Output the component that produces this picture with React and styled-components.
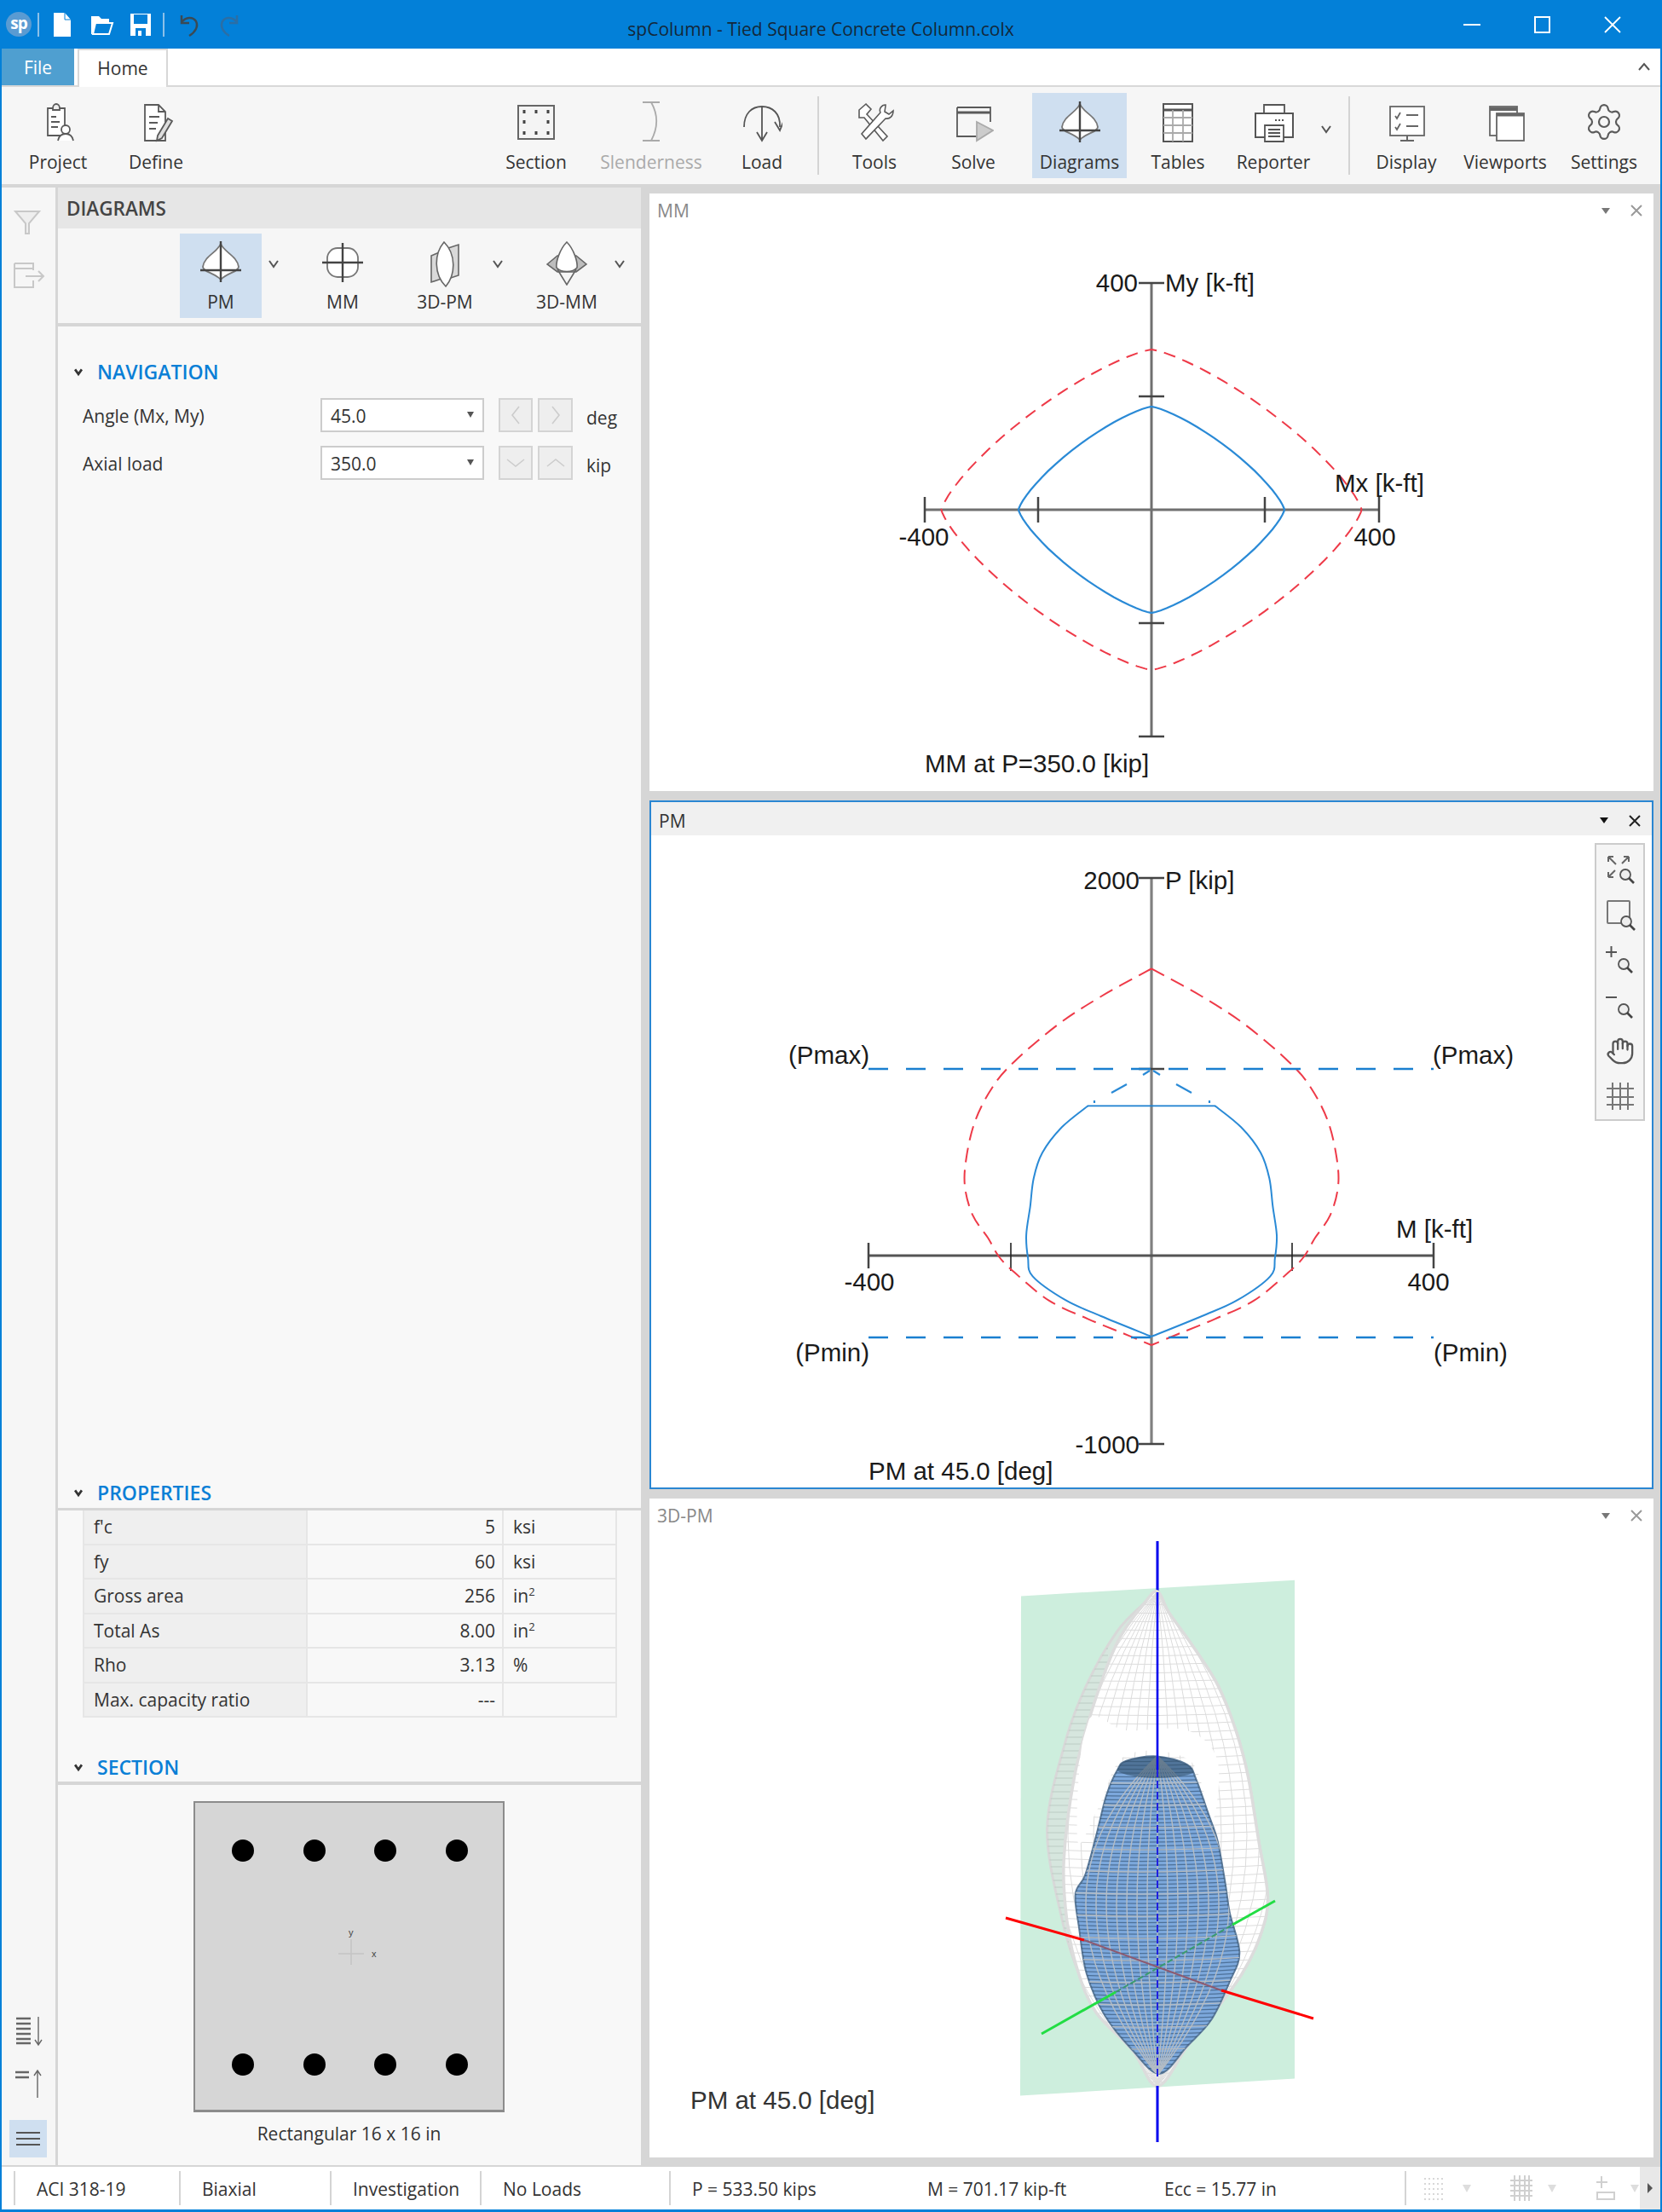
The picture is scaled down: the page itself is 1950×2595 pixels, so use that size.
import { Fragment } from 'react'
import styled, { createGlobalStyle } from 'styled-components'
import { Settings, Hand } from 'lucide-react'

const Global = createGlobalStyle`
   html, body { margin: 0; padding: 0; background: #fff; }
   * { box-sizing: border-box; }
`

const UI_FONT = `"Open Sans", "Noto Sans", sans-serif`
const BLUE = '#0380d8'

/* ---------- chart helpers ---------- */
const smoothPath = (points, closed = false) => {
   const n = points.length
   const at = i => (closed ? points[(i + n) % n] : points[Math.max(0, Math.min(n - 1, i))])
   let d = `M${points[0][0].toFixed(1)} ${points[0][1].toFixed(1)}`
   for (let i = 0; i < (closed ? n : n - 1); i++) {
      const [p0, p1, p2, p3] = [at(i - 1), at(i), at(i + 1), at(i + 2)]
      const c1 = [p1[0] + (p2[0] - p0[0]) / 6, p1[1] + (p2[1] - p0[1]) / 6]
      const c2 = [p2[0] - (p3[0] - p1[0]) / 6, p2[1] - (p3[1] - p1[1]) / 6]
      d += ` C${c1[0].toFixed(1)} ${c1[1].toFixed(1)} ${c2[0].toFixed(1)} ${c2[1].toFixed(1)} ${p2[0].toFixed(1)} ${p2[1].toFixed(1)}`
   }
   return closed ? d + 'Z' : d
}

const superEllipse = (cx, cy, a, b, p) => {
   const out = []
   for (let t = 0; t < 360; t += 4) {
      const r = (t * Math.PI) / 180
      const c = Math.cos(r)
      const s = Math.sin(r)
      out.push(`${(cx + a * Math.sign(c) * Math.abs(c) ** (2 / p)).toFixed(1)},${(cy + b * Math.sign(s) * Math.abs(s) ** (2 / p)).toFixed(1)}`)
   }
   return out.join(' ')
}

// zoom-crop coordinates to page coordinates
const pm = ([x, y]) => [900 + x / 1.96, 1100 + y / 3]
const d3 = ([x, y]) => [1000 + x / 2.8, 1780 + y / 2.24]
const flip = points => points.map(([x, y]) => [2 * 884 - x, y])

const PM_RED = [[884, 112], [1000, 210], [1100, 310], [1200, 440], [1250, 530], [1290, 650], [1310, 780], [1313, 880], [1295, 980], [1260, 1060], [1235, 1125], [1200, 1180], [1120, 1280], [1030, 1345], [950, 1395], [884, 1437]]
const PM_BLUE = [[1030, 595], [1090, 670], [1135, 760], [1155, 850], [1163, 950], [1172, 1050], [1168, 1130], [1157, 1195], [1080, 1280], [1000, 1335], [884, 1407]]
const halves = points => `${smoothPath(points.map(pm))} ${smoothPath(flip(points).map(pm))}`

const SHELL_OUT = [[1003, 195], [1040, 250], [1120, 340], [1200, 440], [1260, 560], [1300, 680], [1335, 850], [1365, 1000], [1340, 1100], [1280, 1200], [1180, 1310], [1100, 1390], [1003, 1495], [920, 1400], [800, 1300], [740, 1190], [690, 1060], [640, 820], [700, 590], [770, 440], [870, 300], [960, 225]].map(d3)
const SHELL_IN = [[1003, 195], [1040, 250], [1120, 340], [1200, 440], [1260, 560], [1300, 680], [1335, 850], [1365, 1000], [1340, 1100], [1280, 1200], [1180, 1310], [1100, 1390], [1003, 1495], [920, 1400], [800, 1300], [740, 1190], [705, 1060], [695, 900], [730, 680], [790, 500], [870, 330], [960, 225]].map(d3)
const CORE = [[1000, 628], [1100, 650], [1130, 690], [1170, 780], [1200, 850], [1225, 960], [1240, 1040], [1272, 1145], [1240, 1220], [1180, 1320], [1100, 1390], [1010, 1462], [920, 1400], [830, 1310], [770, 1200], [745, 1080], [733, 990], [765, 940], [800, 840], [835, 730], [870, 665], [900, 640]].map(d3)
// bare band of the shell behind the top of the core, where the mesh is missing
const SHELL_GAP = [[770, 540], [900, 560], [1100, 560], [1200, 640], [1180, 800], [1110, 640], [900, 625], [810, 760], [740, 850]].map(d3)

const range = (from, to, step) => {
   const out = []
   for (let v = from; v <= to; v += step) out.push(v)
   return out
}

/* ---------- layout ---------- */
const Window = styled.div`
   width: 1950px;
   height: 2595px;
   display: flex;
   flex-direction: column;
   border: solid ${BLUE};
   border-width: 0 2px 3px 2px;
   background: #d6d6d6;
   font-family: ${UI_FONT};
   font-size: 21px;
   color: #333;
   overflow: hidden;
`

const TitleBar = styled.header`
   height: 57px;
   margin: 0 -2px;
   background: ${BLUE};
   display: flex;
   align-items: center;
   position: relative;
   flex: none;
`

const QuickAccess = styled.div`
   display: flex;
   align-items: center;
   padding-left: 7px;
`

const Logo = styled.div`
   width: 30px;
   height: 29px;
   border-radius: 50%;
   background: #5a9bd2;
   color: #fff;
   font: bold 19px/27px ${UI_FONT};
   text-align: center;
   letter-spacing: -1px;
`

const QuickSep = styled.span`
   width: 2px;
   height: 28px;
   background: #8cc0e8;
   margin: 0 ${p => p.$right ?? 0}px 0 ${p => p.$left ?? 0}px;
`

const QuickIcon = styled.svg`
   width: ${p => p.$w}px;
   height: 30px;
   margin-right: ${p => p.$gap ?? 0}px;
   flex: none;
`

const WindowTitle = styled.div`
   position: absolute;
   left: 0;
   right: 24px;
   top: 17px;
   text-align: center;
   color: #13283a;
   font-size: 21px;
   line-height: 34px;
`

const WindowControls = styled.div`
   margin-left: auto;
   display: flex;
   align-items: center;
   padding-right: 48px;
   gap: 63px;
   position: relative;
`

const TabRow = styled.nav`
   height: 45px;
   background: #fff;
   border-bottom: 2px solid #d8d8d8;
   display: flex;
   flex: none;
   position: relative;
`

const FileTab = styled.div`
   width: 85px;
   height: 43px;
   background: #4f9fd0;
   color: #fff;
   text-align: center;
   line-height: 44px;
`

const HomeTab = styled.div`
   width: 106px;
   height: 45px;
   margin-left: 4px;
   background: #fff;
   border: 2px solid #d8d8d8;
   border-bottom: none;
   text-align: center;
   line-height: 42px;
   position: relative;
   z-index: 1;
`

const Collapse = styled.svg`
   position: absolute;
   right: 10px;
   top: 14px;
   width: 18px;
   height: 14px;
`

const Ribbon = styled.section`
   height: 114px;
   background: #f6f6f6;
   display: flex;
   padding: 7px 0 7px 6px;
   flex: none;
`

const RibbonItem = styled.div`
   width: ${p => p.$w}px;
   flex: none;
   display: flex;
   flex-direction: column;
   align-items: center;
   background: ${p => (p.$active ? '#cfdff0' : 'transparent')};
   color: ${p => (p.$disabled ? '#aaa' : '#333')};
   svg { margin-top: 10px; display: block; flex: none; }
`

const RibbonLabel = styled.span`
   margin-top: 9px;
   line-height: 28px;
   white-space: nowrap;
`

const RibbonGap = styled.span`
   width: ${p => p.$w}px;
   flex: none;
`

const RibbonSep = styled.span`
   width: 2px;
   flex: none;
   height: 92px;
   margin-top: 4px;
   background: #d4d4d4;
`

const RibbonChevron = styled.svg`
   width: 20px;
   height: 14px;
   margin: 36px 0 0 -8px;
   flex: none;
`

const Main = styled.main`
   flex: 1;
   min-height: 0;
   display: flex;
   background: #d6d6d6;
   padding-top: 4px;
`

const Rail = styled.aside`
   width: 63px;
   flex: none;
   background: #f6f6f6;
   display: flex;
   flex-direction: column;
   align-items: flex-start;
   padding: 20px 0 9px 9px;
`

const RailIcon = styled.svg`
   width: 44px;
   height: 44px;
   margin-top: ${p => p.$top ?? 0}px;
   flex: none;
`

const RailActive = styled.div`
   width: 44px;
   height: 44px;
   margin-top: 18px;
   background: #cfdff0;
   display: flex;
   flex-direction: column;
   justify-content: center;
   gap: 5px;
   padding: 0 8px;
   span { height: 2px; background: #555; }
`

const SidePanel = styled.div`
   width: 684px;
   margin-left: 3px;
   flex: none;
   background: #f8f8f8;
   display: flex;
   flex-direction: column;
`

const PanelTitle = styled.div`
   height: 48px;
   background: #e6e6e6;
   padding-left: 10px;
   font-weight: 600;
   font-size: 22.5px;
   line-height: 50px;
   color: #444;
   flex: none;
`

const DiagramTools = styled.div`
   height: 111px;
   background: #f6f6f6;
   display: flex;
   padding: 6px 0 0 143px;
   flex: none;
`

const DiagramTool = styled.div`
   width: ${p => p.$w}px;
   height: 99px;
   margin-left: ${p => p.$left ?? 0}px;
   flex: none;
   display: flex;
   flex-direction: column;
   align-items: center;
   background: ${p => (p.$active ? '#cfdff0' : 'transparent')};
   svg { margin-top: 9px; flex: none; }
   span { line-height: 28px; margin: auto 0 5px; }
`

const ToolChevron = styled.svg`
   width: 20px;
   height: 14px;
   margin: 29px 0 0 ${p => p.$before ?? 0}px;
   flex: none;
`

const Rule = styled.div`
   height: ${p => p.$h ?? 4}px;
   background: #d6d6d6;
   flex: none;
`

const SectionHead = styled.div`
   height: ${p => p.$h}px;
   display: flex;
   align-items: center;
   padding-left: 16px;
   margin-top: ${p => p.$top ?? 0}px;
   color: #0a7fd6;
   font-weight: 600;
   font-size: 23px;
   flex: none;
   svg { width: 16px; height: 11px; margin-right: 14px; flex: none; }
`

const NavRow = styled.div`
   display: flex;
   align-items: center;
   height: 40px;
   margin-top: 16px;
   padding-left: 29px;
`

const NavLabel = styled.div`
   width: 279px;
   padding-top: 2px;
   flex: none;
`

const Combo = styled.div`
   width: 192px;
   height: 40px;
   background: #fff;
   border: 2px solid #ccc;
   padding: 0 10px;
   line-height: 38px;
   position: relative;
   flex: none;
   &::after {
      content: '';
      position: absolute;
      right: 10px;
      top: 14px;
      border: solid transparent;
      border-width: 7px 4px 0 4px;
      border-top-color: #555;
   }
`

const Stepper = styled.div`
   width: ${p => (p.$first ? 40 : 41)}px;
   height: 40px;
   margin-left: ${p => (p.$first ? 17 : 6)}px;
   background: #eee;
   border: 2px solid #d4d4d4;
   display: flex;
   align-items: center;
   justify-content: center;
   flex: none;
`

const Unit = styled.div`
   margin-left: 16px;
   padding-top: 6px;
`

const Spacer = styled.div`
   flex: 1;
`

const PropTable = styled.div`
   margin-left: 29px;
   width: 625px;
   display: grid;
   grid-template-columns: 262px 230px 133px;
   grid-auto-rows: 40.5px;
   border-left: 2px solid #e6e6e6;
`

const PropCell = styled.div`
   background: ${p => (p.$head ? '#efefef' : '#f8f8f8')};
   border: solid #e6e6e6;
   border-width: 0 2px 2px 0;
   line-height: 38px;
   padding: ${p => (p.$num ? '0 8px 0 0' : '0 0 0 11px')};
   text-align: ${p => (p.$num ? 'right' : 'left')};
   sup { font-size: 13px; line-height: 0; }
`

const SectionBox = styled.div`
   width: 365px;
   height: 365px;
   margin: 19px 0 0 159px;
   background: #d6d6d6;
   border: 2px solid #8c8c8c;
   border-bottom-width: 3px;
   padding: 43px 41px 0 43px;
   display: flex;
   flex-direction: column;
   flex: none;
   position: relative;
`

const BarRow = styled.div`
   display: flex;
   justify-content: space-between;
   margin-top: ${p => p.$top ?? 0}px;
`

const Bar = styled.span`
   width: 26px;
   height: 26px;
   border-radius: 50%;
   background: #000;
`

const LocalAxes = styled.svg`
   position: absolute;
   left: 165px;
   top: 145px;
   width: 50px;
   height: 60px;
`

const AxisName = styled.text`
   font: 11px "Liberation Sans", sans-serif;
   fill: #444;
   stroke: none;
`

const Caption = styled.div`
   margin: 10px 0 22px 159px;
   width: 365px;
   line-height: 30px;
   text-align: center;
   flex: none;
`

const Viewports = styled.div`
   margin: 7px 0 0 10px;
   width: 1178px;
   flex: none;
   display: grid;
   grid-template-rows: 701px 808px 773px;
   row-gap: 11px;
   align-content: start;
`

const Viewport = styled.section`
   background: #fff;
   display: flex;
   flex-direction: column;
   position: relative;
   outline: ${p => (p.$active ? `2px solid #2a86d2` : 'none')};
   outline-offset: -2px;
   svg.chart { display: block; flex: none; }
`

const ViewHead = styled.div`
   height: ${p => (p.$active ? 39 : 36)}px;
   padding: 4px 12px 0 9px;
   margin: ${p => (p.$active ? '2px 2px -2px' : '0')};
   background: ${p => (p.$active ? '#f0f0f0' : '#fff')};
   color: ${p => (p.$active ? '#333' : '#888')};
   display: flex;
   align-items: center;
   flex: none;
`

const ViewCaret = styled.span`
   margin-left: auto;
   margin-right: 23px;
   border: solid transparent;
   border-width: 7px 5px 0 5px;
   border-top-color: ${p => (p.$active ? '#111' : '#777')};
`

const ViewClose = styled.svg`
   width: 16px;
   height: 16px;
   stroke: ${p => (p.$active ? '#222' : '#999')};
   stroke-width: 2;
`

const ChartText = styled.text`
   font-family: "Liberation Sans", Arial, sans-serif;
   font-size: 29.5px;
   fill: ${p => p.$fill ?? '#1a1a1a'};
   dominant-baseline: central;
`

const ZoomBar = styled.div`
   position: absolute;
   left: 1109px;
   top: 50px;
   width: 59px;
   height: 326px;
   background: #f5f5f5;
   border: 2px solid #ccc;
   display: flex;
   flex-direction: column;
   align-items: center;
   padding-top: 3px;
   color: #666;
   svg { flex: none; display: block; }
`

const ZoomSlot = styled.div`
   height: 54px;
   display: flex;
   align-items: center;
   justify-content: center;
`

const StatusBar = styled.footer`
   height: 52px;
   background: #fff;
   border-top: 2px solid #d6d6d6;
   display: flex;
   align-items: center;
   padding-left: 14px;
   flex: none;
   position: relative;
`

const StatusCell = styled.div`
   width: ${p => p.$w}px;
   height: 40px;
   flex: none;
   padding-left: 25px;
   border-left: ${p => (p.$plain ? 'none' : '2px solid #d4d4d4')};
   line-height: 42px;
   white-space: nowrap;
`

const StatusDivider = styled.span`
   width: 2px;
   height: 40px;
   background: #d4d4d4;
   flex: none;
`

const StatusIcon = styled.svg`
   width: ${p => p.$w}px;
   height: 30px;
   margin-left: ${p => p.$left}px;
   flex: none;
`

const StatusEnd = styled.div`
   position: absolute;
   right: 0;
   top: 0;
   bottom: 0;
   width: 24px;
   background: #e8e8e8;
   display: flex;
   align-items: center;
   justify-content: center;
   &::after {
      content: '';
      border: solid transparent;
      border-width: 6px 0 6px 6px;
      border-left-color: #555;
   }
`

const StatusCaret = styled.span`
   margin-left: ${p => p.$left}px;
   border: solid transparent;
   border-width: 9px 5px 0 5px;
   border-top-color: #ddd;
   flex: none;
`

/* ---------- small icons ---------- */
const Chev = ({ as: As = 'svg', ...rest }) => (
   <As viewBox='0 0 20 14' fill='none' stroke='#555' strokeWidth='2' {...rest}>
      <path d='M5 3l5 7 5-7' />
   </As>
)

const HeadChev = () => <Chev stroke='#333' strokeWidth='3.4' />

const Ico = ({ children, size = 48, stroke = '#5a5a5a', sw = 1.8 }) => (
   <svg width={size} height={size} viewBox='0 0 48 48' fill='none' stroke={stroke} strokeWidth={sw}>
      {children}
   </svg>
)

const PmIcon = () => (
   <Ico>
      <path d='M24 3C20 13 5 17 3 30c0 6 14 7 21 15 7-8 21-9 21-15C43 17 28 13 24 3Z' fill='#fff' stroke='#777' />
      <path d='M24 0v48M0 34h48' stroke='#444' strokeWidth='2.4' />
   </Ico>
)

const MmIcon = () => (
   <Ico>
      <rect x='6' y='8' width='36' height='34' rx='12' fill='#fff' stroke='#777' />
      <path d='M24 2v46M0 25h48' stroke='#444' strokeWidth='2.4' />
   </Ico>
)

const Pm3dIcon = () => (
   <svg width='48' height='54' viewBox='0 0 48 54' fill='none' stroke='#666' strokeWidth='1.6'>
      <path d='M8 17l12-5v32l-12 4Z' fill='#d9d9d9' />
      <path d='M28 8l12-4v36l-12 4Z' fill='#d9d9d9' />
      <path d='M23 1c-12 14-12 38 2 52 12-14 12-38-2-52Z' fill='#fff' />
   </svg>
)

const Mm3dIcon = () => (
   <svg width='50' height='52' viewBox='0 0 50 52' fill='none' stroke='#666' strokeWidth='1.6'>
      <path d='M2 27l12-10h22l12 10-12 9H14Z' fill='#bdbdbd' />
      <path d='M25 1C17 9 12 24 13 31c5 6 19 6 24 0 1-7-4-22-12-30Z' fill='#fff' />
      <path d='M14 33l11 18 11-18' />
   </svg>
)

const ProjectIcon = () => (
   <Ico>
      <path d='M12 8h20v32H12Z' fill='#fff' /><path d='M18 8c0-3 2-5 4-5s4 2 4 5v2h-8Z' fill='#eee' />
      <path d='M16 18h6M16 24h10M16 30h8' strokeWidth='2' />
      <circle cx='33' cy='33' r='5' fill='#fff' /><path d='M24 46c1-5 4-8 9-8s8 3 9 8' fill='#fff' />
   </Ico>
)

const DefineIcon = () => (
   <Ico>
      <path d='M11 4h16l8 8v34H11Z' fill='#fff' /><path d='M27 4v8h8' />
      <path d='M16 18h12M16 25h10M16 32h8' strokeWidth='2' />
      <path d='M26 40l12-20 5 3-12 20-6 3Z' fill='#ddd' />
   </Ico>
)

const SectionIcon = () => (
   <Ico>
      <rect x='3' y='5' width='42' height='39' fill='#f4f4f4' stroke='#666' strokeWidth='2' />
      {[[10, 12], [24, 12], [38, 12], [10, 24], [38, 24], [10, 37], [24, 37], [38, 37]].map(([x, y]) => (
         <rect key={`${x}-${y}`} x={x - 1.5} y={y - 2} width='3' height='4' fill='#444' stroke='none' />
      ))}
   </Ico>
)

const SlenderIcon = () => (
   <Ico stroke='#aaa'>
      <path d='M14 1h20M14 46h20M24 1c8 14 8 30 0 45' />
   </Ico>
)

const LoadIcon = () => (
   <Ico stroke='#555'>
      <path d='M3 30C3 14 12 6 24 6s22 8 21 24' /><path d='M24 6v40M18 36l6 10 6-10' />
      <path d='M39 24l6 10 4-10' />
   </Ico>
)

const ToolsIcon = () => (
   <Ico sw='1.6'>
      <path d='M6 10l8-7 6 6-5 6 24 26-5 5-22-27-6 0Z' fill='#fff' />
      <path d='M37 4c-5 0-8 5-6 9L9 38l5 6 23-24c5 1 9-3 9-9l-5 4-5-3 1-7Z' fill='#fff' />
   </Ico>
)

const SolveIcon = () => (
   <Ico>
      <path d='M5 7h39v17M28 41H5V7' />
      <path d='M5 13h39' strokeWidth='3' />
      <path d='M28 24l19 10-19 12Z' fill='#ccc' stroke='#aaa' />
   </Ico>
)

const TablesIcon = () => (
   <Ico stroke='#555'>
      <rect x='7' y='3' width='34' height='44' fill='#fff' strokeWidth='2' />
      <path d='M7 10h34' strokeWidth='3' />
      <path d='M7 19h34M7 28h34M7 37h34M18 10v37M30 10v37' stroke='#aaa' />
   </Ico>
)

const ReporterIcon = () => (
   <Ico stroke='#555'>
      <path d='M13 14V4h24v10' fill='#fff' />
      <path d='M3 14h44v28H3Z' fill='#fff' strokeWidth='2' />
      <path d='M14 28h22v19H14Z' fill='#fff' />
      <path d='M18 33h14M18 37h14M18 41h14' strokeWidth='2' />
      <path d='M26 22h10' strokeDasharray='2 2' strokeWidth='2' />
   </Ico>
)

const DisplayIcon = () => (
   <Ico stroke='#666'>
      <rect x='5' y='6' width='40' height='34' fill='#fff' />
      <path d='M11 17l2 3 4-7M11 30l2 3 4-7' /><path d='M24 16h14M24 29h14' strokeWidth='2' />
      <path d='M25 40v5M17 46h16' strokeWidth='2' />
   </Ico>
)

const ViewportsIcon = () => (
   <Ico stroke='#666'>
      <rect x='6' y='6' width='32' height='34' fill='#fff' /><path d='M6 9h32' strokeWidth='4' />
      <rect x='14' y='14' width='32' height='32' fill='#fff' /><path d='M14 16h32' strokeWidth='3' />
   </Ico>
)

const MagGlass = ({ x, y }) => (
   <g>
      <circle cx={x} cy={y} r='6' fill='#eee' stroke='#555' strokeWidth='1.8' />
      <path d={`M${x + 4} ${y + 4}l6 6`} stroke='#444' strokeWidth='2.6' />
   </g>
)

const ZoomIcons = [
   <g key='fit'>
      <path d='M6 4l9 9M6 4h6M6 4v6M30 4l-8 8M30 4h-6M30 4v6M6 28l8-8M6 28h6M6 28v-6' stroke='#666' strokeWidth='2' />
      <MagGlass x={26} y={25} />
   </g>,
   <g key='window'>
      <rect x='5' y='3' width='26' height='26' rx='1' stroke='#777' strokeWidth='2' fill='none' />
      <MagGlass x={27} y={27} />
   </g>,
   <g key='in'>
      <path d='M3 10h13M9.5 3v13' stroke='#555' strokeWidth='2' />
      <MagGlass x={24} y={24} />
   </g>,
   <g key='out'>
      <path d='M3 10h13' stroke='#555' strokeWidth='2' />
      <MagGlass x={24} y={24} />
   </g>,
]

const CloseX = ({ active }) => (
   <ViewClose $active={active} viewBox='0 0 16 16'>
      <path d='M2 2l12 12M14 2L2 14' />
   </ViewClose>
)

/* ---------- charts ---------- */
const MmChart = () => (
   <svg className='chart' width='1178' height='665' viewBox='762 263 1178 665' fill='none'>
      <path d='M1351 332v532M1085 598h533' stroke='#707070' strokeWidth='3' />
      <path d='M1336 332h30M1336 465h30M1336 731h30M1336 864h30M1085 583v30M1618 583v30M1218 583v30M1484 583v30' stroke='#444' strokeWidth='2.5' />
      <polygon points={superEllipse(1351, 598, 246.5, 188, 1.3)} stroke='#ee3a48' strokeWidth='2' strokeDasharray='14 9' />
      <polygon points={superEllipse(1351, 598, 156, 121, 1.3)} stroke='#2a8ad6' strokeWidth='2.2' />
      <ChartText x='1335' y='331' textAnchor='end'>400</ChartText>
      <ChartText x='1367' y='331'>My [k-ft]</ChartText>
      <ChartText x='1566' y='566'>Mx [k-ft]</ChartText>
      <ChartText x='1084' y='629' textAnchor='middle'>-400</ChartText>
      <ChartText x='1613' y='629' textAnchor='middle'>400</ChartText>
      <ChartText x='1085' y='895'>MM at P=350.0 [kip]</ChartText>
   </svg>
)

const PmChart = () => (
   <svg className='chart' width='1178' height='769' viewBox='762 979 1178 769' fill='none'>
      <path d='M1351 1031v664' stroke='#808080' strokeWidth='3.2' />
      <path d='M1019 1474h663' stroke='#555' strokeWidth='3.2' />
      <path d='M1336 1031h30M1336 1255h30M1336 1695h30M1019 1459v30M1682 1459v30' stroke='#444' strokeWidth='2.5' />
      <path d='M1186 1459v33M1516 1459v33' stroke='#222' strokeWidth='1.6' />
      <path d={halves(PM_RED)} stroke='#ee3a48' strokeWidth='2' strokeDasharray='17 9' />
      <path d={halves(PM_BLUE)} stroke='#2a8ad6' strokeWidth='2' />
      <path d='M1276 1298.3H1426' stroke='#1a7fd0' strokeWidth='1.8' />
      <path d='M1019 1255h663M1019 1570h663' stroke='#1a7fd0' strokeWidth='2.6' strokeDasharray='23 21' />
      <path d='M1322 1273l-18 10M1380 1273l18 10M1349 1257l-8 5M1353 1257l8 5M1284 1292v3M1419 1292v3' stroke='#2a8ad6' strokeWidth='2.2' />
      <ChartText x='1337' y='1033' textAnchor='end'>2000</ChartText>
      <ChartText x='1367' y='1033'>P [kip]</ChartText>
      <ChartText x='1020' y='1238' textAnchor='end'>(Pmax)</ChartText>
      <ChartText x='1681' y='1238'>(Pmax)</ChartText>
      <ChartText x='1020' y='1587' textAnchor='end'>(Pmin)</ChartText>
      <ChartText x='1682' y='1587'>(Pmin)</ChartText>
      <ChartText x='1638' y='1442'>M [k-ft]</ChartText>
      <ChartText x='1020' y='1504' textAnchor='middle'>-400</ChartText>
      <ChartText x='1676' y='1504' textAnchor='middle'>400</ChartText>
      <ChartText x='1337' y='1695' textAnchor='end'>-1000</ChartText>
      <ChartText x='1019' y='1726'>PM at 45.0 [deg]</ChartText>
   </svg>
)

const Column3d = () => (
   <svg className='chart' width='1178' height='737' viewBox='762 1794 1178 737' fill='none'>
      <defs>
         <clipPath id='shellOutClip'><path d={smoothPath(SHELL_OUT, true)} /></clipPath>
         <clipPath id='shellClip'><path d={smoothPath(SHELL_IN, true)} /></clipPath>
         <clipPath id='coreClip'><path d={smoothPath(CORE, true)} /></clipPath>
      </defs>
      <path d='M1198 1872.4L1519 1853.7V2438.5L1197 2458.6Z' fill='#cdeedd' />
      <path d='M1358 1808V1868' stroke='#0000ee' strokeWidth='3' />
      <path d={smoothPath(SHELL_OUT, true)} fill='#d6e6de' stroke='#d8d8d8' strokeWidth='3' />
      <g clipPath='url(#shellOutClip)' stroke='#bcccc4' strokeWidth='1'>
         {range(1870, 2450, 8).map(y => (
            <path key={y} d={`M1220 ${y}H1300`} />
         ))}
      </g>
      <path d={smoothPath(SHELL_IN, true)} fill='#fff' stroke='#dcdcdc' strokeWidth='3.5' />
      <g clipPath='url(#shellClip)' stroke='#dcdcdc' strokeWidth='1'>
         {range(1870, 2450, 10).map(y => (
            <path key={y} d={`M1230 ${y}Q1358 ${y + 6} 1490 ${y - 2}`} />
         ))}
         {range(-9, 9, 1).map(k => (
            <path key={k} d={`M1358 1867Q${1358 + k * 30} 2150 1358 2447`} />
         ))}
         <path d={smoothPath(SHELL_GAP, true)} fill='#fff' stroke='none' />
      </g>
      <path d={smoothPath(CORE, true)} fill='#7ca8dc' stroke='#5b7a9a' strokeWidth='2' />
      <g clipPath='url(#coreClip)'>
         <g stroke='#1f3a56' strokeWidth='1.2' opacity='.5'>
            {range(2060, 2440, 4.5).map(y => (
               <path key={y} d={`M1250 ${y}Q1358 ${y + 5} 1460 ${y - 2}`} />
            ))}
         </g>
         <g stroke='#b4bcc4' strokeWidth='1.4'>
            {range(-7, 7, 1).map(k => (
               <path key={k} d={`M1358 2060Q${1358 + k * 24} 2220 1358 2435`} />
            ))}
            {range(2090, 2420, 26).map(y => (
               <path key={y} d={`M1250 ${y}Q1358 ${y + 5} 1460 ${y - 2}`} />
            ))}
         </g>
         <ellipse cx='1358' cy='2073' rx='50' ry='13' fill='#34526c' opacity='.6' />
      </g>
      <path d='M1358 1868V2076' stroke='#0000ee' strokeWidth='2.6' />
      <path d='M1358 2076V2440' stroke='#2020e0' strokeWidth='2' strokeDasharray='9 4' />
      <path d='M1358 2447V2513' stroke='#0000ee' strokeWidth='3' />
      <path d='M1180 2250L1272 2276M1433 2335L1541 2368' stroke='#f00' strokeWidth='3' />
      <path d='M1272 2276L1433 2335' stroke='#8d5a70' strokeWidth='2' />
      <path d='M1222 2386L1309 2337M1446 2258L1496 2230' stroke='#22dd44' strokeWidth='3' />
      <path d='M1309 2337L1446 2258' stroke='#3a9a70' strokeWidth='2' strokeDasharray='7 3' />
      <ChartText x='810' y='2463' $fill='#333'>PM at 45.0 [deg]</ChartText>
   </svg>
)

/* ---------- data ---------- */
const RIBBON = [
   { label: 'Project', w: 120, icon: <ProjectIcon /> },
   { label: 'Define', w: 110, icon: <DefineIcon /> },
   { gap: 336 },
   { label: 'Section', w: 110, icon: <SectionIcon /> },
   { label: 'Slenderness', w: 160, icon: <SlenderIcon />, disabled: true },
   { label: 'Load', w: 100, icon: <LoadIcon /> },
   { gap: 15 },
   { sep: true },
   { gap: 10 },
   { label: 'Tools', w: 110, icon: <ToolsIcon /> },
   { gap: 6 },
   { label: 'Solve', w: 110, icon: <SolveIcon /> },
   { gap: 14 },
   { label: 'Diagrams', w: 111, icon: <PmIcon />, active: true },
   { gap: 8 },
   { label: 'Tables', w: 104, icon: <TablesIcon /> },
   { label: 'Reporter', w: 120, icon: <ReporterIcon /> },
   { chevron: true },
   { gap: 16 },
   { sep: true },
   { gap: 16 },
   { label: 'Display', w: 100, icon: <DisplayIcon /> },
   { gap: 6 },
   { label: 'Viewports', w: 120, icon: <ViewportsIcon /> },
   { gap: 6 },
   { label: 'Settings', w: 100, icon: <Settings size={48} strokeWidth={1.1} color='#5a5a5a' /> },
]

const PROPS = [
   ["f'c", '5', 'ksi'],
   ['fy', '60', 'ksi'],
   ['Gross area', '256', <>in<sup>2</sup></>],
   ['Total As', '8.00', <>in<sup>2</sup></>],
   ['Rho', '3.13', '%'],
   ['Max. capacity ratio', '---', ''],
]

const ribbonPart = (item, i) => {
   if (item.gap) return <RibbonGap key={i} $w={item.gap} />
   if (item.sep) return <RibbonSep key={i} />
   if (item.chevron) return <Chev key={i} as={RibbonChevron} />
   return (
      <RibbonItem key={item.label} $w={item.w} $active={item.active} $disabled={item.disabled}>
         {item.icon}
         <RibbonLabel>{item.label}</RibbonLabel>
      </RibbonItem>
   )
}

const App = () => {
   return (
      <Window>
         <Global />
         <TitleBar>
            <QuickAccess>
               <Logo>sp</Logo>
               <QuickSep $left={7} $right={15} />
               <QuickIcon $w={24} $gap={19} viewBox='0 0 24 30'>
                  <path d='M2 1h13l7 8v20H2Z' fill='#fff' /><path d='M15 1v8h7' fill='none' stroke='#0380d8' />
               </QuickIcon>
               <QuickIcon $w={30} $gap={18} viewBox='0 0 30 30'>
                  <path d='M3 5h9l3 3h9v4H9L4 26H3Z' fill='#fff' />
                  <path d='M8 13h20l-4 13H5Z' fill='none' stroke='#fff' strokeWidth='2' />
               </QuickIcon>
               <QuickIcon $w={26} $gap={13} viewBox='0 0 26 30'>
                  <path d='M1 2h24v26H1Z' fill='#fff' /><path d='M5 3h16v11H5Z' fill='#0380d8' /><path d='M7 19h12v9H7Z' fill='#0380d8' /><path d='M10 22h4v6h-4Z' fill='#fff' />
               </QuickIcon>
               <QuickSep $right={17} />
               <QuickIcon $w={24} $gap={23} viewBox='0 0 24 30'>
                  <path d='M3 4v9h9M3 12C8 6 16 5 20 11c3 6-1 13-8 17' fill='none' stroke='#3a4a55' strokeWidth='2.5' />
               </QuickIcon>
               <QuickIcon $w={24} viewBox='0 0 24 30'>
                  <path d='M21 4v9h-9M21 12C16 6 8 5 4 11c-3 6 1 13 8 17' fill='none' stroke='#2b6ea5' strokeWidth='2.5' />
               </QuickIcon>
            </QuickAccess>
            <WindowTitle>spColumn - Tied Square Concrete Column.colx</WindowTitle>
            <WindowControls>
               <svg width='20' height='4'><path d='M0 2h20' stroke='#fff' strokeWidth='2' /></svg>
               <svg width='19' height='20' fill='none'><rect x='1' y='1' width='17' height='18' stroke='#fff' strokeWidth='2' /></svg>
               <svg width='20' height='20' fill='none'><path d='M1 1l18 18M19 1L1 19' stroke='#fff' strokeWidth='1.8' /></svg>
            </WindowControls>
         </TitleBar>

         <TabRow>
            <FileTab>File</FileTab>
            <HomeTab>Home</HomeTab>
            <Collapse viewBox='0 0 18 14' fill='none' stroke='#555' strokeWidth='2'>
               <path d='M3 11l6-7 6 7' />
            </Collapse>
         </TabRow>

         <Ribbon>{RIBBON.map(ribbonPart)}</Ribbon>

         <Main>
            <Rail>
               <RailIcon viewBox='0 0 44 44' fill='none' stroke='#c8c8c8' strokeWidth='2'>
                  <path d='M7 8h28L23 22v12h-4V22Z' fill='#eee' />
               </RailIcon>
               <RailIcon $top={18} viewBox='0 0 44 44' fill='none' stroke='#c8c8c8' strokeWidth='2'>
                  <path d='M6 7h22v8M6 13h22M6 7v28h22v-8M19 22h21M34 16l6 6-6 6' />
               </RailIcon>
               <Spacer />
               <RailIcon viewBox='0 0 44 44' fill='none' stroke='#666'>
                  <path d='M8 8h17M8 14h17M8 20h17M8 26h17M8 32h17M8 37h17' strokeWidth='2.4' />
                  <path d='M34 6v33M30 33l4 6 4-6' strokeWidth='1.4' />
               </RailIcon>
               <RailIcon $top={21} viewBox='0 0 44 44' fill='none' stroke='#666'>
                  <path d='M7 6h16M7 12h16' strokeWidth='2.4' />
                  <path d='M33 36V4M29 10l4-6 4 6' strokeWidth='1.4' />
               </RailIcon>
               <RailActive><span /><span /><span /></RailActive>
            </Rail>

            <SidePanel>
               <PanelTitle>DIAGRAMS</PanelTitle>
               <DiagramTools>
                  <DiagramTool $w={96} $active>
                     <PmIcon />
                     <span>PM</span>
                  </DiagramTool>
                  <Chev as={ToolChevron} $before={4} />
                  <DiagramTool $w={100} $left={21}>
                     <MmIcon />
                     <span>MM</span>
                  </DiagramTool>
                  <DiagramTool $w={120} $left={10}>
                     <Pm3dIcon />
                     <span>3D-PM</span>
                  </DiagramTool>
                  <Chev as={ToolChevron} $before={-8} />
                  <DiagramTool $w={120} $left={11}>
                     <Mm3dIcon />
                     <span>3D-MM</span>
                  </DiagramTool>
                  <Chev as={ToolChevron} $before={-8} />
               </DiagramTools>
               <Rule />

               <SectionHead $h={30} $top={38}>
                  <HeadChev />NAVIGATION
               </SectionHead>
               <NavRow>
                  <NavLabel>Angle (Mx, My)</NavLabel>
                  <Combo>45.0</Combo>
                  <Stepper $first><svg width='14' height='24' fill='none' stroke='#ccc' strokeWidth='1.6'><path d='M11 2L3 12l8 10' /></svg></Stepper>
                  <Stepper><svg width='14' height='24' fill='none' stroke='#ccc' strokeWidth='1.6'><path d='M3 2l8 10-8 10' /></svg></Stepper>
                  <Unit>deg</Unit>
               </NavRow>
               <NavRow>
                  <NavLabel>Axial load</NavLabel>
                  <Combo>350.0</Combo>
                  <Stepper $first><svg width='24' height='14' fill='none' stroke='#ccc' strokeWidth='1.6'><path d='M2 3l10 8 10-8' /></svg></Stepper>
                  <Stepper><svg width='24' height='14' fill='none' stroke='#ccc' strokeWidth='1.6'><path d='M2 11l10-8 10 8' /></svg></Stepper>
                  <Unit>kip</Unit>
               </NavRow>
               <Spacer />

               <SectionHead $h={36}>
                  <HeadChev />PROPERTIES
               </SectionHead>
               <Rule $h={3} />
               <PropTable>
                  {PROPS.map(([name, value, unit]) => (
                     <Fragment key={name}>
                        <PropCell $head>{name}</PropCell>
                        <PropCell $num>{value}</PropCell>
                        <PropCell>{unit}</PropCell>
                     </Fragment>
                  ))}
               </PropTable>

               <SectionHead $h={34} $top={41}>
                  <HeadChev />SECTION
               </SectionHead>
               <Rule />
               <SectionBox>
                  <BarRow>{[0, 1, 2, 3].map(i => <Bar key={i} />)}</BarRow>
                  <BarRow $top={225}>{[0, 1, 2, 3].map(i => <Bar key={i} />)}</BarRow>
                  <LocalAxes viewBox='0 0 50 60' fill='none' stroke='#c4c4c4' strokeWidth='1.5'>
                     <path d='M18 15v30M3 32h30' />
                     <AxisName x='15' y='11'>y</AxisName>
                     <AxisName x='42' y='36'>x</AxisName>
                  </LocalAxes>
               </SectionBox>
               <Caption>Rectangular 16 x 16 in</Caption>
            </SidePanel>

            <Viewports>
               <Viewport>
                  <ViewHead>MM<ViewCaret /><CloseX /></ViewHead>
                  <MmChart />
               </Viewport>
               <Viewport $active>
                  <ViewHead $active>PM<ViewCaret $active /><CloseX active /></ViewHead>
                  <PmChart />
                  <ZoomBar>
                     {ZoomIcons.map(icon => (
                        <ZoomSlot key={icon.key}>
                           <svg width='40' height='40' viewBox='0 0 40 40' fill='none'>{icon}</svg>
                        </ZoomSlot>
                     ))}
                     <ZoomSlot><Hand size={34} strokeWidth={1.6} color='#555' /></ZoomSlot>
                     <ZoomSlot>
                        <svg width='34' height='34' viewBox='0 0 34 34' fill='none' stroke='#777' strokeWidth='2'>
                           <path d='M1 8h32M1 18h32M1 27h32M8 1v32M17 1v32M26 1v32' />
                        </svg>
                     </ZoomSlot>
                  </ZoomBar>
               </Viewport>
               <Viewport>
                  <ViewHead>3D-PM<ViewCaret /><CloseX /></ViewHead>
                  <Column3d />
               </Viewport>
            </Viewports>
         </Main>

         <StatusBar>
            <StatusCell $w={194}>ACI 318-19</StatusCell>
            <StatusCell $w={177}>Biaxial</StatusCell>
            <StatusCell $w={176}>Investigation</StatusCell>
            <StatusCell $w={222}>No Loads</StatusCell>
            <StatusCell $w={278}>P = 533.50 kips</StatusCell>
            <StatusCell $w={278} $plain>M = 701.17 kip-ft</StatusCell>
            <StatusCell $w={307} $plain>Ecc = 15.77 in</StatusCell>
            <StatusDivider />
            <StatusIcon $w={26} $left={20} viewBox='0 0 26 30' fill='none' stroke='#d8d8d8' strokeWidth='2' strokeDasharray='2 3'>
               <path d='M1 4h24M1 10h24M1 16h24M1 22h24M1 28h24' />
            </StatusIcon>
            <StatusCaret $left={20} />
            <StatusIcon $w={26} $left={46} viewBox='0 0 26 30' fill='none' stroke='#d0d0d0' strokeWidth='2'>
               <path d='M0 6h26M0 12h26M0 18h26M0 24h26M5 0v30M11 0v30M17 0v30M22 0v30' />
            </StatusIcon>
            <StatusCaret $left={18} />
            <StatusIcon $w={22} $left={47} viewBox='0 0 22 30' fill='none' stroke='#d0d0d0' strokeWidth='2'>
               <path d='M6 1v14M0 8h13M1 20h20v8H1Z' />
            </StatusIcon>
            <StatusCaret $left={18} />
            <StatusEnd />
         </StatusBar>
      </Window>
   )
}

export default App
